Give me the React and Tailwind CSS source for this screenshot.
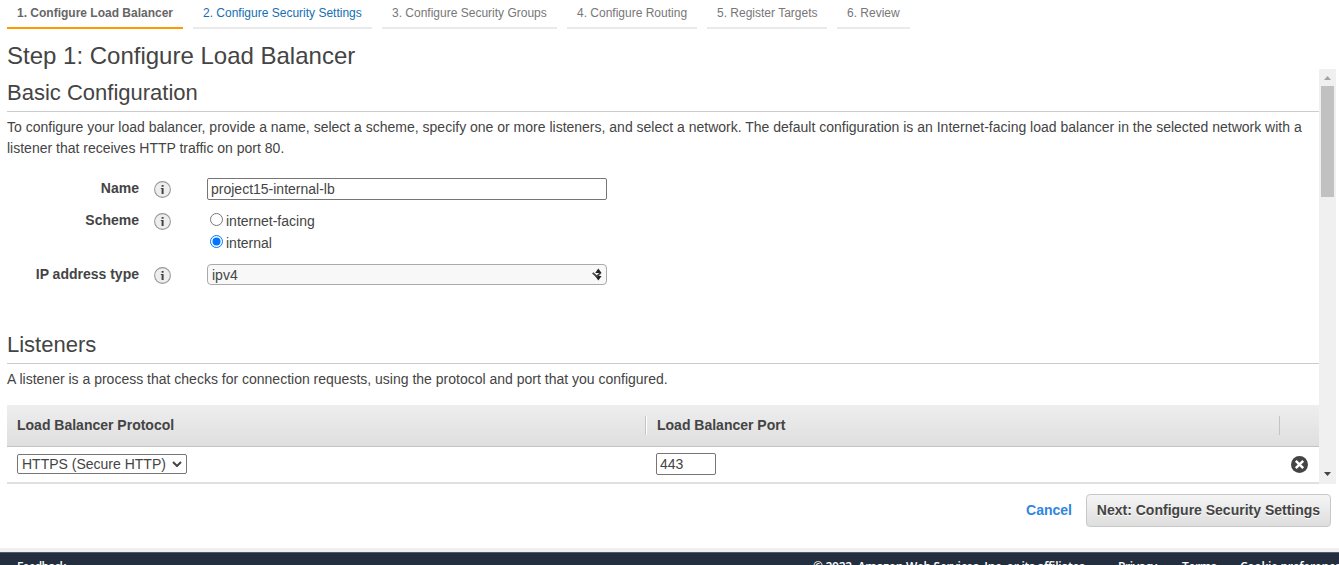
const steps = [
  { label: '1. Configure Load Balancer', cls: 'w-[176px] font-bold text-[#666] border-[#ff9900]' },
  { label: '2. Configure Security Settings', cls: 'w-[179px] text-[#146eb4] border-[#eaeaea]' },
  { label: '3. Configure Security Groups', cls: 'w-[175px] text-[#777] border-[#eaeaea]' },
  { label: '4. Configure Routing', cls: 'w-[130px] text-[#777] border-[#eaeaea]' },
  { label: '5. Register Targets', cls: 'w-[120px] text-[#777] border-[#eaeaea]' },
  { label: '6. Review', cls: 'w-[73px] text-[#777] border-[#eaeaea]' },
];

function InfoIcon() {
  return (
    <svg className="ml-[15px] mt-px h-[17px] w-[17px] shrink-0" viewBox="0 0 17 17">
      <circle cx="8.5" cy="8.5" r="7.9" fill="#eee" stroke="#999" strokeWidth="1.1" />
      <path d="M7.6 4h2v1.8h-2zM6.8 7h2.8v6h-2V8h-.8z" fill="#444" />
    </svg>
  );
}

function Label({ children }) {
  return (
    <div className="flex w-[200px] shrink-0">
      <span className="w-[132px] whitespace-nowrap text-right font-bold leading-[16px]">{children}</span>
      <InfoIcon />
    </div>
  );
}

function SectionTitle({ children }) {
  return <h2 className="h-[34px] border-b border-[#ccc] text-[22px] leading-[30px]">{children}</h2>;
}

function Radio({ checked, children }) {
  return (
    <div className="flex h-[22px] items-center">
      <svg className="-mt-[3px] ml-[3px] mr-[3px] h-[13px] w-[13px]" viewBox="0 0 13 13">
        <circle cx="6.5" cy="6.5" r="6" fill="#fff" stroke={checked ? '#0075ff' : '#767676'} />
        {checked && <circle cx="6.5" cy="6.5" r="4" fill="#0075ff" />}
      </svg>
      <span>{children}</span>
    </div>
  );
}

export default function App() {
  return (
    <div className="flex h-[565px] w-[1339px] flex-col overflow-hidden bg-white font-['Liberation_Sans',Arial,sans-serif] text-[14px] text-[#444]">
      <nav className="flex h-[29px] shrink-0 gap-[10px] pl-[7px] text-[12px]">
        {steps.map((s) => (
          <div key={s.label} className={`h-[29px] shrink-0 whitespace-nowrap border-b-2 pl-[10px] leading-[26px] ${s.cls}`}>{s.label}</div>
        ))}
      </nav>
      <h1 className="h-[40px] shrink-0 pl-[7px] pt-[12px] text-[24px] leading-[30px]">Step 1: Configure Load Balancer</h1>

      <div className="flex h-[415px] shrink-0 pl-[7px]">
        <main className="w-[1312px] pt-[9px]">
          <SectionTitle>Basic Configuration</SectionTitle>
          <p className="mt-[5px] whitespace-nowrap leading-[21px]">
            To configure your load balancer, provide a name, select a scheme, specify one or more listeners, and select a network. The default configuration is an Internet-facing load balancer in the selected network with a<br />
            listener that receives HTTP traffic on port 80.
          </p>
          <div className="mt-[19px] flex h-[32px]">
            <div className="pt-[2px]"><Label>Name</Label></div>
            <div className="flex h-[22px] w-[400px] items-center rounded-[2px] border border-[#767676] pl-[3px]">project15-internal-lb</div>
          </div>
          <div className="flex h-[54px]">
            <div className="pt-[2px]"><Label>Scheme</Label></div>
            <div>
              <Radio>internet-facing</Radio>
              <Radio checked>internal</Radio>
            </div>
          </div>
          <div className="flex h-[66px]">
            <div className="pt-[2px]"><Label>IP address type</Label></div>
            <div className="flex h-[21px] w-[400px] items-center justify-between rounded-[4px] border border-[#aaa] bg-[#f8f8f8] pl-[4px] pr-[4px]">
              <span className="pt-[2px] leading-[17px]">ipv4</span>
              <svg className="-mt-px h-[13px] w-[10px]" viewBox="0 0 10 13">
                <path d="M3.2 5 6.3.5 9.6 5zM3.2 8h6.4L6.3 12.5z" fill="#222" />
                <path d="M.7 4.8 4.7 8.5 8.7 4.8" fill="none" stroke="#444" strokeWidth="1.8" />
              </svg>
            </div>
          </div>
          <SectionTitle>Listeners</SectionTitle>
          <p className="mt-[5px] whitespace-nowrap leading-[21px]">A listener is a process that checks for connection requests, using the protocol and port that you configured.</p>
          <div className="mt-[15px] flex h-[42px] items-center border-b border-[#c4c4c4] bg-linear-to-b from-[#eee] to-[#dfdfdf] font-bold">
            <div className="w-[638px] pl-[10px]">Load Balancer Protocol</div>
            <div className="flex h-[19px] w-[634px] items-center border-l border-[#c4c4c4] pl-[11px] shadow-[inset_1px_0_0_#fff]">Load Balancer Port</div>
            <div className="h-[19px] w-[40px] border-l border-[#c4c4c4]" />
          </div>
          <div className="flex h-[37px] items-center border-b-2 border-[#e0e0e0]">
            <div className="w-[649px] pl-[10px]">
              <div className="-mt-px flex h-[20px] w-[170px] items-center justify-between rounded-[2px] border border-[#767676] pl-[4px] pr-[4px]">
                <span className="whitespace-nowrap">HTTPS (Secure HTTP)</span>
                <svg className="h-[6px] w-[10px]" viewBox="0 0 10 6"><path d="m1 1 4 4 4-4" fill="none" stroke="#444" strokeWidth="2" /></svg>
              </div>
            </div>
            <div className="-mt-px flex h-[22px] w-[60px] items-center rounded-[2px] border border-[#767676] pl-[3px]">443</div>
            <svg className="-mt-px ml-auto mr-[11px] h-[17px] w-[17px]" viewBox="0 0 17 17">
              <circle cx="8.5" cy="8.5" r="8.5" fill="#444" />
              <path d="m4.8 4.8 7.4 7.4M12.2 4.8l-7.4 7.4" stroke="#fff" strokeWidth="2.5" />
            </svg>
          </div>
        </main>
        <div className="flex w-[17px] flex-col items-center bg-[#f0f0f0]">
          <svg className="mt-[7px] h-[4px] w-[7px]" viewBox="0 0 7 4"><path d="M0 4 3.5 0 7 4z" fill="#a3a3a3" /></svg>
          <div className="mt-[6px] h-[111px] w-[13px] bg-[#c1c1c1]" />
          <svg className="mb-[8px] mt-auto h-[4px] w-[7px]" viewBox="0 0 7 4"><path d="m0 0 3.5 4L7 0z" fill="#444" /></svg>
        </div>
      </div>

      <div className="flex h-[64px] shrink-0 justify-end pr-[8px] pt-[10px] font-bold">
        <span className="mr-[14px] leading-[32px] text-[#2e86de]">Cancel</span>
        <div className="flex h-[33px] w-[245px] items-center justify-center whitespace-nowrap rounded-[4px] border border-[#c8c8c8] bg-linear-to-b from-[#f5f5f5] to-[#dedede] [text-shadow:0_1px_0_#fff]">Next: Configure Security Settings</div>
      </div>
      <footer className="flex h-[17px] shrink-0 overflow-hidden whitespace-nowrap border-t-4 border-[#f0f0f0] bg-[#232f3e] font-['Open_Sans',sans-serif] text-[12px] font-semibold leading-[16px] tracking-[-0.28px] text-white shadow-[inset_0_1px_0_#545b64]">
        <span className="w-[796px] shrink-0 pl-[17px] pt-[7px] tracking-[-0.8px]">Feedback</span>
        <span className="w-[322px] shrink-0 pl-[17px] pt-[7px]">© 2022, Amazon Web Services, Inc. or its affiliates.</span>
        <span className="w-[64px] shrink-0 pt-[7px] tracking-[-0.4px]">Privacy</span>
        <span className="w-[58px] shrink-0 pt-[7px] tracking-[-0.4px]">Terms</span>
        <span className="shrink-0 pt-[7px]">Cookie preferences</span>
      </footer>
    </div>
  );
}
